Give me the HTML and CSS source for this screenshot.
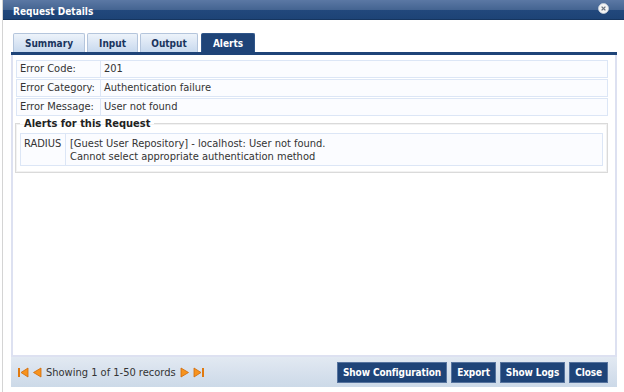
FILE: index.html
```html
<!DOCTYPE html>
<html lang="en">
<head>
  <meta charset="UTF-8">
  <title>Request Details</title>
  <link rel="stylesheet" href="styles.css">
</head>
<body>
  <div class="window">
    <div class="titlebar">
      <span class="title">Request Details</span>
      <svg class="close-btn" width="11" height="11" viewBox="0 0 11 11">
        <circle cx="5.5" cy="5.5" r="5" fill="#f4f4f4" stroke="#c8d0dc" stroke-width="0.8"/>
        <path d="M3.6 3.6 L7.4 7.4 M7.4 3.6 L3.6 7.4" stroke="#6a7380" stroke-width="1.3"/>
      </svg>
    </div>

    <div class="main">
      <div class="tabs">
        <div class="tab tab-summary">Summary</div>
        <div class="tab tab-input">Input</div>
        <div class="tab tab-output">Output</div>
        <div class="tab tab-alerts active">Alerts</div>
      </div>

      <div class="panel">
        <div class="detail-row">
          <div class="label">Error Code:</div>
          <div class="value">201</div>
        </div>
        <div class="detail-row">
          <div class="label">Error Category:</div>
          <div class="value">Authentication failure</div>
        </div>
        <div class="detail-row">
          <div class="label">Error Message:</div>
          <div class="value">User not found</div>
        </div>

        <fieldset class="alerts">
          <legend>Alerts for this Request</legend>
          <div class="alert-row">
            <div class="label">RADIUS</div>
            <div class="value">[Guest User Repository] - localhost: User not found.<br>Cannot select appropriate authentication method</div>
          </div>
        </fieldset>
      </div>

      <div class="footer">
        <div class="pager">
          <svg width="11" height="11" viewBox="0 0 11 11"><path d="M1 1 V10" stroke="#e07a10" stroke-width="2"/><path d="M10 1 L3 5.5 L10 10 Z" fill="#f7931e" stroke="#d06a08" stroke-width="0.8"/></svg>
          <svg width="10" height="11" viewBox="0 0 10 11"><path d="M9 1 L1.5 5.5 L9 10 Z" fill="#f7931e" stroke="#d06a08" stroke-width="0.8"/></svg>
          <span class="pager-text">Showing 1 of 1-50 records</span>
          <svg width="10" height="11" viewBox="0 0 10 11"><path d="M1 1 L8.5 5.5 L1 10 Z" fill="#f7931e" stroke="#d06a08" stroke-width="0.8"/></svg>
          <svg width="11" height="11" viewBox="0 0 11 11"><path d="M1 1 L8 5.5 L1 10 Z" fill="#f7931e" stroke="#d06a08" stroke-width="0.8"/><path d="M10 1 V10" stroke="#e07a10" stroke-width="2"/></svg>
        </div>
        <div class="actions">
          <button type="button">Show Configuration</button>
          <button type="button">Export</button>
          <button type="button">Show Logs</button>
          <button type="button">Close</button>
        </div>
      </div>
    </div>
  </div>
</body>
</html>
```

FILE: styles.css
```css
body {
  margin: 0;
  background-color: #fff;
  font-family: "DejaVu Sans Condensed", "DejaVu Sans", sans-serif;
  font-size: 11px;
  color: #333;
}
.window {
  margin-left: 2px;
  border-left: 1px solid #d4d4d4;
  height: 392px;
}
.titlebar {
  display: flex;
  justify-content: space-between;
  align-items: center;
  height: 20px;
  padding: 0 15px 0 10px;
  background: linear-gradient(#5b78a4, #456592 50%, #22487c 52%, #1d4376);
  border-bottom: 1px solid #16355f;
  box-sizing: border-box;
}
.title {
  padding-top: 3px;
  color: #fff;
  font-weight: bold;
  font-size: 10px;
}
.close-btn {
  margin-top: -3px;
}
.main {
  padding: 13px 7px 0 8px;
}
.tabs {
  display: flex;
  gap: 2px;
  padding-left: 2px;
  border-bottom: 3px solid #1f4478;
}
.tab {
  height: 19px;
  line-height: 19px;
  text-align: center;
  border: 1px solid #b4c5dc;
  border-bottom: none;
  border-radius: 2px 2px 0 0;
  background: linear-gradient(#edf3fa, #c8d9ee);
  color: #1a355e;
  font-size: 10px;
  font-weight: bold;
  box-sizing: border-box;
}
.tab-summary { width: 72px; }
.tab-input { width: 51px; }
.tab-output { width: 58px; }
.tab-alerts { width: 54px; margin-left: 1px; }
.tab.active {
  background: #1f4478;
  border-color: #2f5589;
  color: #fff;
}
.panel {
  height: 302px;
  padding: 5px 7px 0 3px;
  border: 2px solid #dde1f1;
  border-top: none;
  box-sizing: border-box;
}
.detail-row {
  display: grid;
  grid-template-columns: 84px 1fr;
  height: 18px;
  margin-bottom: 1px;
  border: 1px solid #dce6f6;
  background-color: #fbfcff;
  box-sizing: border-box;
}
.detail-row .label {
  padding-left: 3px;
  line-height: 16px;
  border-right: 1px solid #dce6f6;
}
.detail-row .value {
  padding-left: 3px;
  line-height: 16px;
}
.alerts {
  margin: 0 0 0 -1px;
  padding: 3px 4px 6px 4px;
  border: 1px solid #dadada;
  box-shadow: inset 0 0 0 1px #f2f2f2;
}
.alerts legend {
  padding: 0 4px;
  font-size: 11px;
  font-weight: bold;
  color: #222;
}
.alert-row {
  display: grid;
  grid-template-columns: 45px 1fr;
  border: 1px solid #dce6f6;
  background-color: #fbfcff;
}
.alert-row .label {
  padding: 3px 0 0 3px;
  line-height: 13px;
  border-right: 1px solid #dce6f6;
}
.alert-row .value {
  padding: 3px 0 2px 4px;
  line-height: 13px;
}
.footer {
  display: flex;
  justify-content: space-between;
  align-items: center;
  height: 30px;
  padding: 0 9px 0 7px;
  background: linear-gradient(#e2e9f2, #ccd9e8);
}
.pager {
  display: flex;
  align-items: center;
  gap: 3px;
  font-size: 11px;
  color: #333;
}
.pager-text {
  margin: 0 1px;
}
.actions {
  display: flex;
  gap: 4px;
}
.actions button {
  height: 21px;
  padding: 0 5px;
  border: 1px solid #56739e;
  background: #1f4478;
  color: #fff;
  font-family: "DejaVu Sans Condensed", "DejaVu Sans", sans-serif;
  font-size: 10px;
  font-weight: bold;
  letter-spacing: -0.1px;
  cursor: pointer;
}
```
